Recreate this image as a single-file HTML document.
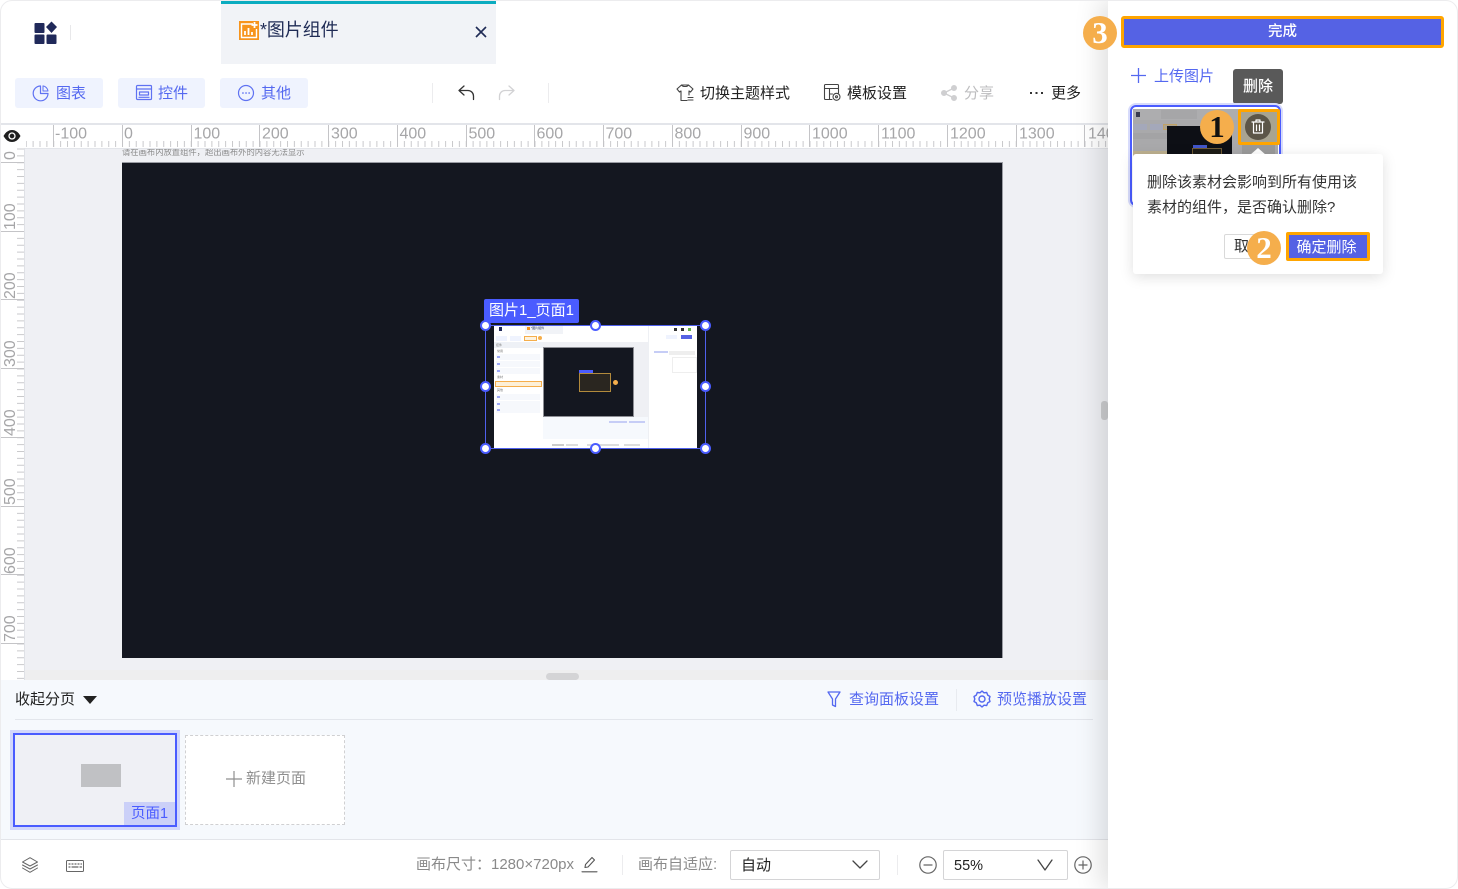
<!DOCTYPE html>
<html lang="zh">
<head>
<meta charset="utf-8">
<title>图片组件</title>
<style>
html,body{margin:0;padding:0;width:1458px;height:889px;overflow:hidden;background:#fff}
body{font-family:"Liberation Sans","Noto Sans CJK SC",sans-serif;font-size:15px;color:#222;position:relative}
div,span,svg{position:absolute;box-sizing:border-box}
.t{white-space:nowrap;line-height:20px}
.btn{background:#eff3fe;border-radius:3px;top:78px;height:30px}
.blue{color:#5468f0}
.gray{color:#8a8a8a}
.h{width:11px;height:11px;border-radius:50%;background:#fff;border:2px solid #4a5cff}
.badge{width:34px;height:34px;border-radius:50%;background:#f5ae4c;text-align:center;font-family:"Liberation Serif",serif;font-weight:bold;font-size:31px;line-height:33px}
svg{overflow:visible}
.ic{fill:none;stroke-linecap:round;stroke-linejoin:round}
.m{font-size:3px;line-height:4px;white-space:nowrap;color:#777}
</style>
</head>
<body>

<!-- canvas area -->
<div style="left:0;top:148px;width:1108px;height:532px;background:#eff0f4"></div>
<div style="left:122px;top:162px;width:881px;height:496px;background:#141720;border:1px solid #9a9ca3;border-width:1px 1px 0 0"></div>
<div class="t" style="left:122px;top:147px;font-size:8.3px;line-height:10px;color:#8a8a8a">请在画布内放置组件，超出画布外的内容无法显示</div>
<div style="left:24px;top:670px;width:1084px;height:10px;background:#eeeeef"></div>
<div style="left:546px;top:673px;width:33px;height:7px;background:#d4d4d6;border-radius:4px"></div>
<div style="left:1101px;top:401px;width:7px;height:19px;background:#cccdcf;border-radius:3px"></div>

<!-- top ruler -->
<svg style="left:0;top:123px" width="1108" height="26" viewBox="0 0 1108 26">
<defs><pattern id="mt" patternUnits="userSpaceOnUse" width="6.875" height="26" patternTransform="translate(5.125 0)"><rect x="0" y="18" width="1" height="6" fill="#c9c9cc"/></pattern></defs>
<rect width="1108" height="26" fill="#fff"/>
<rect x="26" width="1082" height="26" fill="url(#mt)"/>
<rect width="1108" height="2" fill="#e3e5ea"/>
<rect y="25" width="1108" height="1" fill="#e3e5ea"/>
<g fill="#c4c4c7">
<rect x="53" y="2" width="1" height="22"/><rect x="122" y="2" width="1" height="22"/><rect x="191" y="2" width="1" height="22"/><rect x="259" y="2" width="1" height="22"/><rect x="328" y="2" width="1" height="22"/><rect x="397" y="2" width="1" height="22"/><rect x="466" y="2" width="1" height="22"/><rect x="534" y="2" width="1" height="22"/><rect x="603" y="2" width="1" height="22"/><rect x="672" y="2" width="1" height="22"/><rect x="741" y="2" width="1" height="22"/><rect x="809" y="2" width="1" height="22"/><rect x="878" y="2" width="1" height="22"/><rect x="947" y="2" width="1" height="22"/><rect x="1016" y="2" width="1" height="22"/><rect x="1084" y="2" width="1" height="22"/>
</g>
<g font-family="Liberation Sans,sans-serif" font-size="16" fill="#a6a6a8">
<text x="55" y="15.500">-100</text><text x="124" y="15.500">0</text><text x="193.500" y="15.500">100</text><text x="262" y="15.500">200</text><text x="331" y="15.500">300</text><text x="399.500" y="15.500">400</text><text x="468.500" y="15.500">500</text><text x="536.500" y="15.500">600</text><text x="605.500" y="15.500">700</text><text x="674.500" y="15.500">800</text><text x="743.500" y="15.500">900</text><text x="812" y="15.500">1000</text><text x="881" y="15.500">1100</text><text x="950" y="15.500">1200</text><text x="1019" y="15.500">1300</text><text x="1088" y="15.500">1400</text>
</g>
</svg>
<!-- eye -->
<div style="left:0;top:125px;width:25px;height:23px;background:#fff"></div>
<svg style="left:3px;top:130px" width="18" height="12" viewBox="0 0 18 12"><path d="M0.500 6C3 1.500 6 0 9 0s6 1.500 8.500 6C15 10.500 12 12 9 12S3 10.500 0.500 6z" fill="#1f1f1f"/><circle cx="9" cy="6" r="3" fill="none" stroke="#fff" stroke-width="1.300"/></svg>

<!-- left ruler -->
<svg style="left:0;top:148px" width="25" height="532" viewBox="0 0 25 532">
<defs><pattern id="ml" patternUnits="userSpaceOnUse" width="25" height="6.875" patternTransform="translate(0 0.500)"><rect x="17" y="0" width="7" height="1" fill="#c9c9cc"/></pattern></defs>
<rect width="25" height="532" fill="#fff"/>
<rect width="25" height="532" fill="url(#ml)"/>
<rect x="24" width="1" height="532" fill="#dfe1e6"/>
<g fill="#c4c4c7"><rect y="14" width="24" height="1"/><rect y="83" width="24" height="1"/><rect y="151" width="24" height="1"/><rect y="220" width="24" height="1"/><rect y="289" width="24" height="1"/><rect y="358" width="24" height="1"/><rect y="426" width="24" height="1"/><rect y="495" width="24" height="1"/></g>
<g font-family="Liberation Sans,sans-serif" font-size="16" fill="#a6a6a8">
<text transform="translate(15 12) rotate(-90)">0</text><text transform="translate(15 82) rotate(-90)">100</text><text transform="translate(15 151) rotate(-90)">200</text><text transform="translate(15 219) rotate(-90)">300</text><text transform="translate(15 288) rotate(-90)">400</text><text transform="translate(15 357) rotate(-90)">500</text><text transform="translate(15 426) rotate(-90)">600</text><text transform="translate(15 494) rotate(-90)">700</text>
</g>
</svg>

<!-- header -->
<svg style="left:34px;top:21px" width="24" height="24" viewBox="0 0 24 24" fill="#20295a"><rect x="0.500" y="2" width="10" height="10" rx="1"/><rect x="0.500" y="13.500" width="10" height="9.500" rx="1"/><rect x="12.500" y="13.500" width="10" height="9.500" rx="1"/><path d="M17.500 0.500l5.500 5.500-5.500 6-5.500-6z"/></svg>
<div style="left:70px;top:25px;width:1px;height:15px;background:#e8e8ea"></div>
<div style="left:221px;top:1px;width:275px;height:63px;background:#f1f3f7;border-top:3px solid #0bacc0"></div>
<svg style="left:239px;top:21px" width="20" height="19" viewBox="0 0 20 19"><rect width="20" height="19" fill="#f7941d"/><path d="M14 3H2.500v13.500h15V8" fill="none" stroke="#fff" stroke-width="1.400"/><path d="M6 14V10M9.500 14V7M13 14V11" stroke="#fff" stroke-width="1.800"/><path d="M15.500 1v6M12.500 4h6" stroke="#fff" stroke-width="1.800"/></svg>
<div class="t" style="left:260px;top:20px;font-size:18px;color:#1f2b55;letter-spacing:-.1px">*图片组件</div>
<svg style="left:475px;top:26px" width="12" height="12" viewBox="0 0 12 12"><path d="M1 1l10 10M11 1L1 11" stroke="#1f2b55" stroke-width="1.600"/></svg>

<!-- toolbar -->
<div class="btn" style="left:15px;width:88px"></div>
<svg class="ic" style="left:33px;top:85px" width="16" height="16" viewBox="0 0 16 16" stroke="#5f72f2" stroke-width="1.200"><path d="M7.500 1A7.400 7.400 0 1 0 15 8.500H7.500z"/><path d="M10 .9A6 6 0 0 1 15 6h-5z" stroke-width="1"/></svg>
<div class="t blue" style="left:56px;top:84px">图表</div>
<div class="btn" style="left:118px;width:87px"></div>
<svg class="ic" style="left:136px;top:85px" width="16" height="15" viewBox="0 0 16 15" stroke="#5f72f2" stroke-width="1.200"><rect x=".5" y=".5" width="15" height="14" rx="1"/><path d="M.5 4h15M3.500 7h9v3h-9zM3 12.300h10"/></svg>
<div class="t blue" style="left:158px;top:84px">控件</div>
<div class="btn" style="left:220px;width:88px"></div>
<svg class="ic" style="left:238px;top:85px" width="16" height="16" viewBox="0 0 16 16" stroke="#5f72f2" stroke-width="1.200"><circle cx="8" cy="8" r="7.500"/><path d="M4.800 8h.3M7.900 8h.3M11 8h.3" stroke-width="1.500"/></svg>
<div class="t blue" style="left:261px;top:84px">其他</div>
<div style="left:432px;top:83px;width:1px;height:20px;background:#ececee"></div>
<svg class="ic" style="left:458px;top:85px" width="17" height="16" viewBox="0 0 17 16" stroke="#333" stroke-width="1.300"><path d="M6 1L1 5.500 6 10M1 5.500h9a5.500 5.500 0 0 1 5.500 5.500v3.500"/></svg>
<svg class="ic" style="left:498px;top:85px" width="17" height="16" viewBox="0 0 17 16" stroke="#d2d2d4" stroke-width="1.300"><path d="M11 1l5 4.500L11 10M16 5.500H7A5.500 5.500 0 0 0 1.500 11v3.500"/></svg>
<div style="left:548px;top:83px;width:1px;height:20px;background:#ececee"></div>
<svg class="ic" style="left:676px;top:84px" width="18" height="18" viewBox="0 0 18 18" stroke="#444" stroke-width="1.100"><path d="M5.500 1L1 5l2.500 3 1.500-1v9.500h6M12.500 1L17 5l-2.500 3-1.500-1v4M5.500 1c1 2 6 2 7 0z"/><path d="M12 13.500h5M12 16h5"/></svg>
<div class="t" style="left:700px;top:84px">切换主题样式</div>
<svg class="ic" style="left:824px;top:84px" width="17" height="17" viewBox="0 0 17 17" stroke="#444" stroke-width="1.100"><path d="M8 15.500H1.500a1 1 0 0 1-1-1v-13a1 1 0 0 1 1-1h12a1 1 0 0 1 1 1V9"/><path d="M.5 4.500h14M5.500 4.500v11M5.500 10h3"/><circle cx="12.500" cy="12.800" r="3.500"/><circle cx="12.500" cy="12.800" r="1"/></svg>
<div class="t" style="left:847px;top:84px">模板设置</div>
<svg style="left:941px;top:85px" width="16" height="16" viewBox="0 0 16 16" fill="#cfcfd1" stroke="#cfcfd1"><circle cx="3" cy="8" r="2.500"/><circle cx="13" cy="3" r="2.500"/><circle cx="13" cy="13" r="2.500"/><path d="M3 8l10-5M3 8l10 5" stroke-width="1.300"/></svg>
<div class="t" style="left:964px;top:84px;color:#bdbdbf">分享</div>
<svg style="left:1030px;top:91px" width="14" height="4" viewBox="0 0 14 4" fill="#333"><rect x="0" y="1" width="2" height="2"/><rect x="5.500" y="1" width="2" height="2"/><rect x="11" y="1" width="2" height="2"/></svg>
<div class="t" style="left:1051px;top:84px">更多</div>

<!-- selected image in canvas -->
<div style="left:494px;top:325px;width:203px;height:124px;background:#fff;overflow:hidden">
  <div style="left:31px;top:1px;width:38px;height:8px;background:#f1f3f7"></div>
  <div style="left:33px;top:2px;width:3px;height:3px;background:#f7941d"></div>
  <div class="m" style="left:37px;top:1px;color:#1f2b55">*图片组件</div>
  <div style="left:5px;top:2px;width:3px;height:4px;background:#20295a"></div>
  <div style="left:2px;top:11px;width:11px;height:5px;background:#eff3fe"></div>
  <div style="left:16px;top:11px;width:11px;height:5px;background:#eff3fe"></div>
  <div style="left:30px;top:11px;width:13px;height:5px;background:#fdf3e0;border:1px solid #f5ae4c"></div>
  <div style="left:44px;top:11px;width:4px;height:4px;border-radius:50%;background:#f5ae4c"></div>
  <div style="left:0;top:17px;width:49px;height:6px;background:#eef1f6"></div>
  <div class="m" style="left:2px;top:18px">控件</div>
  <div class="m" style="left:3px;top:24px">常用</div>
  <div style="left:2px;top:29px;width:44px;height:6px;background:#f6f8fc"></div>
  <div style="left:3px;top:31px;width:3px;height:2px;background:#9aa6f5"></div>
  <div style="left:2px;top:36px;width:44px;height:6px;background:#f6f8fc"></div>
  <div style="left:3px;top:38px;width:3px;height:2px;background:#9aa6f5"></div>
  <div style="left:2px;top:43px;width:44px;height:6px;background:#f6f8fc"></div>
  <div style="left:3px;top:45px;width:3px;height:2px;background:#9aa6f5"></div>
  <div class="m" style="left:3px;top:50px">素材</div>
  <div style="left:1px;top:56px;width:47px;height:6px;background:#fdf0d8;border:1px solid #f5ae4c"></div>
  <div style="left:50px;top:56px;width:5px;height:5px;border-radius:50%;background:#f5ae4c"></div>
  <div class="m" style="left:3px;top:63px">其他</div>
  <div style="left:2px;top:69px;width:44px;height:6px;background:#f6f8fc"></div>
  <div style="left:3px;top:71px;width:3px;height:2px;background:#9aa6f5"></div>
  <div style="left:2px;top:76px;width:44px;height:6px;background:#f6f8fc"></div>
  <div style="left:3px;top:78px;width:3px;height:2px;background:#9aa6f5"></div>
  <div style="left:2px;top:82px;width:44px;height:6px;background:#f6f8fc"></div>
  <div style="left:3px;top:84px;width:3px;height:2px;background:#9aa6f5"></div>
  <div style="left:49px;top:17px;width:105px;height:75px;background:#eff0f4"></div>
  <div style="left:49px;top:22px;width:91px;height:70px;background:#141720;border:1px solid #8e8f95"></div>
  <div style="left:85px;top:48px;width:32px;height:19px;background:#2a2620;border:1px solid #b28a3c"></div>
  <div style="left:85px;top:45px;width:14px;height:3px;background:#4a5cff"></div>
  <div style="left:119px;top:55px;width:5px;height:5px;border-radius:50%;background:#f5ae4c"></div>
  <div style="left:49px;top:92px;width:105px;height:22px;background:#f6f9fd"></div>
  <div style="left:115px;top:96px;width:18px;height:2px;background:#c6cdf6"></div>
  <div style="left:135px;top:96px;width:16px;height:2px;background:#c6cdf6"></div>
  <div style="left:49px;top:114px;width:105px;height:10px;background:#fff"></div>
  <div style="left:58px;top:119px;width:12px;height:2px;background:#ccc"></div>
  <div style="left:72px;top:119px;width:12px;height:2px;background:#ddd"></div>
  <div style="left:93px;top:119px;width:32px;height:2px;background:#ddd"></div>
  <div style="left:130px;top:119px;width:16px;height:2px;background:#ddd"></div>
  <div style="left:154px;top:0;width:49px;height:124px;background:#fff;border-left:1px solid #eef0f4"></div>
  <div style="left:160px;top:26px;width:14px;height:2px;background:#c6cdf6"></div>
  <div style="left:175px;top:26px;width:26px;height:4px;background:#eee"></div>
  <div style="left:178px;top:32px;width:25px;height:16px;border:1px solid #eee"></div>
  <div style="left:187px;top:10px;width:11px;height:4px;background:#5562e4"></div>
  <div style="left:172px;top:10px;width:11px;height:4px;background:#eff3fe"></div>
  <div style="left:180px;top:3px;width:3px;height:3px;background:#333"></div>
  <div style="left:187px;top:3px;width:3px;height:3px;background:#333"></div>
  <div style="left:194px;top:3px;width:3px;height:3px;background:#66b24a"></div>
</div>
<div style="left:485px;top:325px;width:221px;height:124px;border:1.600px solid #4f60ec"></div>
<div class="t" style="left:484px;top:299px;width:95px;height:24px;background:#4a5cff;border-radius:2px;color:#fff;line-height:24px;text-align:center">图片1_页面1</div>
<div class="h" style="left:480px;top:320px"></div>
<div class="h" style="left:590px;top:320px"></div>
<div class="h" style="left:700px;top:320px"></div>
<div class="h" style="left:480px;top:381px"></div>
<div class="h" style="left:700px;top:381px"></div>
<div class="h" style="left:480px;top:443px"></div>
<div class="h" style="left:590px;top:443px"></div>
<div class="h" style="left:700px;top:443px"></div>

<!-- pages panel -->
<div style="left:0;top:680px;width:1108px;height:160px;background:#f6f9fd;border-bottom:1px solid #e3e5ea"></div>
<div class="t" style="left:15px;top:690px;color:#222">收起分页</div>
<svg style="left:83px;top:696px" width="14" height="8" viewBox="0 0 14 8"><path d="M0 0h14L7 8z" fill="#222"/></svg>
<svg class="ic" style="left:827px;top:691px" width="14" height="17" viewBox="0 0 14 17" stroke="#5468f0" stroke-width="1.300"><path d="M1 1h12L8.500 8v7.500l-3-1.500V8z"/></svg>
<div class="t blue" style="left:849px;top:690px">查询面板设置</div>
<div style="left:956px;top:689px;width:1px;height:22px;background:#e8ebf0"></div>
<svg class="ic" style="left:973px;top:690px" width="18" height="18" viewBox="0 0 18 18" stroke="#5468f0" stroke-width="1.400"><path d="M9 1l2 1.800 2.700-.3 1 2.600 2.300 1.400-.8 2.500.8 2.500-2.300 1.400-1 2.600-2.700-.3L9 17l-2-1.800-2.700.3-1-2.600L1 11.500 1.800 9 1 6.500l2.300-1.400 1-2.600 2.700.3z"/><circle cx="9" cy="9" r="3"/></svg>
<div class="t blue" style="left:997px;top:690px">预览播放设置</div>
<div style="left:15px;top:719px;width:1078px;height:1px;background:#e3e6ec"></div>
<div style="left:10px;top:730px;width:170px;height:100px;background:#d2d7fb"></div>
<div style="left:13px;top:733px;width:164px;height:94px;background:#eff0f5;border:2px solid #4a5cff"></div>
<div style="left:81px;top:764px;width:40px;height:23px;background:#c0c1c4"></div>
<div class="t" style="left:124px;top:802px;width:51px;height:23px;background:#cbd0f8;color:#4a5cff;line-height:24px;text-align:center;font-size:14.500px">页面1</div>
<div style="left:185px;top:735px;width:160px;height:90px;background:#fff;border:1px dashed #d0d0d2"></div>
<svg style="left:226px;top:771px" width="16" height="16" viewBox="0 0 16 16"><path d="M8 0v16M0 8h16" stroke="#8f8f8f" stroke-width="1.200"/></svg>
<div class="t" style="left:246px;top:769px;color:#8f8f8f">新建页面</div>

<!-- bottom bar -->
<svg class="ic" style="left:22px;top:857px" width="16" height="16" viewBox="0 0 16 16" stroke="#666" stroke-width="1"><path d="M8 .7L15.500 5 8 9 .5 5z"/><path d="M.5 8L8 12l7.500-4"/><path d="M.5 11L8 15.300l7.500-4.300"/></svg>
<svg class="ic" style="left:66px;top:860px" width="18" height="12" viewBox="0 0 18 12" stroke="#666" stroke-width="1"><rect x=".5" y=".5" width="17" height="11" rx="1"/><path d="M3 4h1M6 4h1M9 4h1M12 4h1M15 4h.5M3 7h1M6 7h6M14 7h1.500" stroke-width="1.200"/></svg>
<div class="t gray" style="left:416px;top:855px">画布尺寸：1280×720px</div>
<svg class="ic" style="left:581px;top:856px" width="17" height="17" viewBox="0 0 17 17" stroke="#555" stroke-width="1.100"><path d="M4 11.500l.5-3L11 1.500l2.500 2.500L7 11z"/><path d="M1 15.800h15"/></svg>
<div style="left:622px;top:855px;width:1px;height:20px;background:#ececee"></div>
<div class="t gray" style="left:638px;top:855px">画布自适应:</div>
<div style="left:730px;top:850px;width:150px;height:30px;border:1px solid #d4d4d6;border-radius:2px;background:#fff"></div>
<div class="t" style="left:741px;top:856px;color:#222">自动</div>
<svg class="ic" style="left:852px;top:860px" width="16" height="10" viewBox="0 0 16 10" stroke="#444" stroke-width="1.300"><path d="M1 1l7 7 7-7"/></svg>
<div style="left:897px;top:855px;width:1px;height:20px;background:#ececee"></div>
<svg class="ic" style="left:919px;top:856px" width="18" height="18" viewBox="0 0 18 18" stroke="#666" stroke-width="1.200"><circle cx="9" cy="9" r="8.200"/><path d="M5 9h8"/></svg>
<div style="left:943px;top:850px;width:125px;height:30px;border:1px solid #d4d4d6;border-radius:2px;background:#fff"></div>
<div class="t" style="left:954px;top:856px;color:#222;font-size:14.500px">55%</div>
<svg class="ic" style="left:1037px;top:859px" width="16" height="12" viewBox="0 0 16 12" stroke="#444" stroke-width="1.300"><path d="M1 1l7 10 7-10"/></svg>
<svg class="ic" style="left:1074px;top:856px" width="18" height="18" viewBox="0 0 18 18" stroke="#666" stroke-width="1.200"><circle cx="9" cy="9" r="8.200"/><path d="M5 9h8M9 5v8"/></svg>

<!-- right panel -->
<div style="left:1108px;top:0;width:350px;height:889px;background:#fff;box-shadow:-6px 0 26px rgba(0,0,0,.14)"></div>
<div class="t" style="left:1121px;top:16px;width:323px;height:32px;background:#5562e4;border:3px solid #ffa500;border-radius:3px;color:#fff;line-height:27px;text-align:center;font-size:14.500px;font-weight:500">完成</div>
<svg style="left:1131px;top:68px" width="15" height="15" viewBox="0 0 15 15"><path d="M7.500 0v15M0 7.500h15" stroke="#5468f0" stroke-width="1.300"/></svg>
<div class="t blue" style="left:1154px;top:67px">上传图片</div>
<div class="t" style="left:1233px;top:69px;width:50px;height:35px;background:#595959;border-radius:3px;color:#fff;line-height:36px;text-align:center;font-weight:500">删除</div>

<!-- material card -->
<div style="left:1130px;top:105px;width:151px;height:101px;border:2px solid #4a5cff;border-radius:6px;box-shadow:0 0 0 2px #d7dbfb;background:#fff"></div>
<div style="left:1133px;top:109px;width:145px;height:94px;background:#a9a9ab;overflow:hidden">
  <div style="left:0;top:0;width:145px;height:11px;background:#adadaf"></div>
  <div style="left:28px;top:1px;width:36px;height:9px;background:#a6a6a8"></div>
  <div style="left:3px;top:3px;width:4px;height:5px;background:#3a3d50"></div>
  <div style="left:1px;top:15px;width:13px;height:6px;background:#a4a8ba"></div>
  <div style="left:17px;top:15px;width:13px;height:6px;background:#a4a8ba"></div>
  <div style="left:30px;top:15px;width:14px;height:6px;background:#aea48e;border:1px solid #c0a267"></div>
  <div style="left:0;top:24px;width:34px;height:6px;background:#a3a3a5"></div>
  <div style="left:34px;top:17px;width:65px;height:60px;background:#0d0f15"></div>
  <div style="left:60px;top:36px;width:14px;height:3px;background:#4256c9"></div>
  <div style="left:59px;top:39px;width:30px;height:20px;border:1px solid #6f5b35;background:#1d1b16"></div>
  <div style="left:0;top:42px;width:34px;height:8px;background:#bdb08f"></div>
</div>
<div style="left:1241px;top:112px;width:36px;height:30px;background:#a8a491"></div>
<div style="left:1238px;top:109px;width:42px;height:36px;border:3px solid #ffa500;border-radius:2px"></div>
<div style="left:1245px;top:114px;width:26px;height:26px;border-radius:50%;background:#5c5648"></div>
<svg class="ic" style="left:1251px;top:119px" width="14" height="15" viewBox="0 0 14 15" stroke="#fff" stroke-width="1.200"><path d="M1 3h12M5 3V1h4v2M2.500 3v11h9V3M5.500 6v5.500M8.500 6v5.500"/></svg>
<div style="left:1242px;top:145px;width:33px;height:9px;background:#9a9a9a"></div>
<svg style="left:1250px;top:148px" width="16" height="7" viewBox="0 0 16 7"><path d="M8 0l8 7H0z" fill="#fff"/></svg>

<!-- popover -->
<div style="left:1133px;top:154px;width:250px;height:120px;background:#fff;border-radius:3px;box-shadow:0 3px 14px rgba(0,0,0,.13)"></div>
<div class="t" style="left:1147px;top:170px;line-height:25px;color:#333;white-space:nowrap">删除该素材会影响到所有使用该<br>素材的组件，是否确认删除?</div>
<div class="t" style="left:1224px;top:234px;width:46px;height:25px;background:#fff;border:1px solid #d9d9d9;border-radius:2px;line-height:24px;padding-left:9px;color:#333">取消</div>
<div class="t" style="left:1286px;top:232px;width:84px;height:29px;background:#5562e4;border:3px solid #ffa500;border-radius:2px;color:#fff;line-height:25px;text-align:center;font-size:15px;padding-right:3px">确定删除</div>

<!-- badges -->
<div class="badge" style="left:1200px;top:110px;color:#111">1</div>
<div class="badge" style="left:1247px;top:231px;color:#fff">2</div>
<div class="badge" style="left:1083px;top:16px;color:#fff">3</div>

<!-- window frame -->
<div style="left:0;top:0;width:1458px;height:889px;border:1px solid #ececee;border-radius:12px;box-shadow:0 0 0 6px #fff"></div>
</body>
</html>
